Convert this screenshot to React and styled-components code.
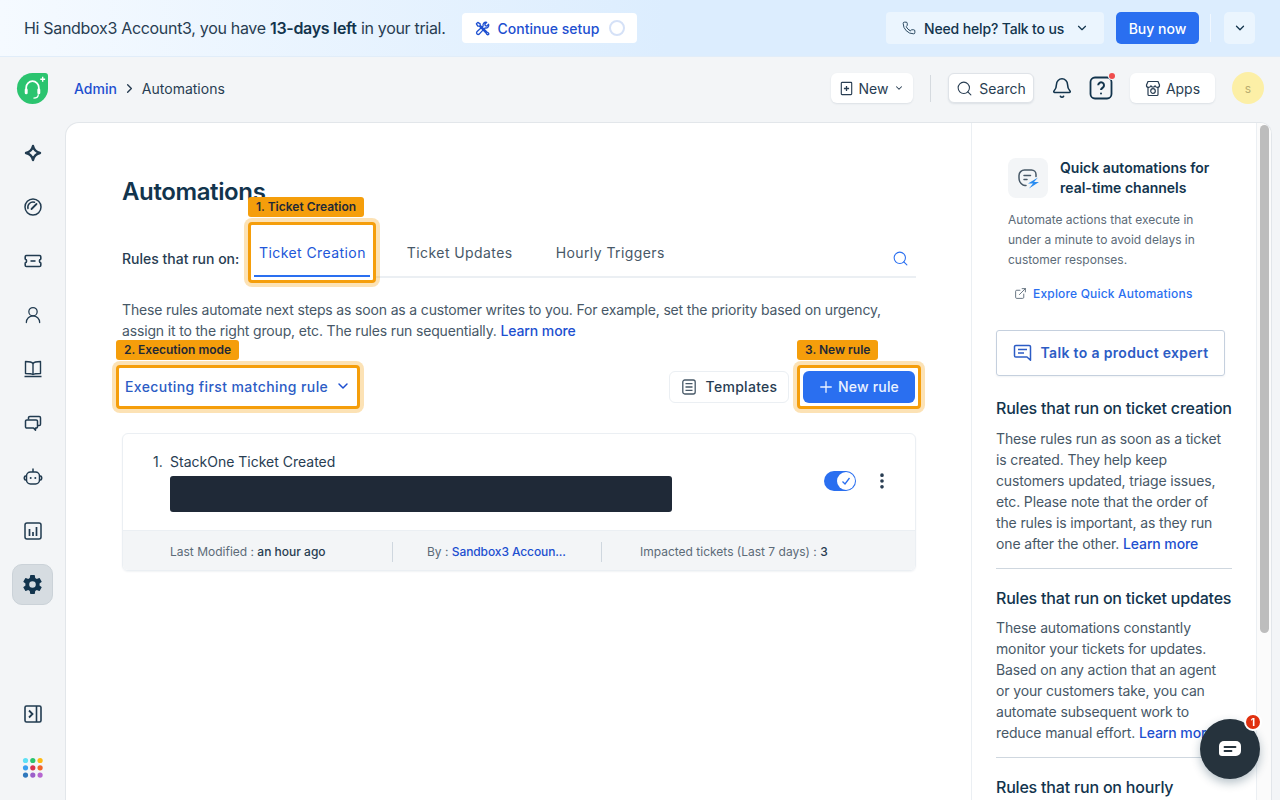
import React from "react"
import styled, { createGlobalStyle } from "styled-components"
import { BellIcon, ChevronDown, ChevronRight, ExternalLink, MoreVertical, Phone, Plus, Search, UserRound } from "lucide-react"
import { IoSettingsSharp } from "react-icons/io5"

const GlobalStyle = createGlobalStyle`
  html, body {
    margin: 0;
    height: 100%;
    overflow: hidden;
    background: #f3f5f7;
    font-family: Inter, "Liberation Sans", sans-serif;
    color: #12344d;
  }
  * { box-sizing: border-box; }
`

const Page = styled.div`
  width: 1280px;
  height: 800px;
  display: flex;
  flex-direction: column;
  overflow: hidden;
`

/* trial banner */
const Banner = styled.div`
  height: 57px;
  flex: none;
  display: flex;
  align-items: center;
  padding: 0 25px 0 24px;
  background: linear-gradient(90deg, #f5faff 0%, #dcedfe 52%, #dcedfe 100%);
  border-bottom: 1px solid #e1edf9;
`
const TrialText = styled.div`
  font-size: 16px;
  letter-spacing: -0.31px;
  color: #283d52;
  white-space: nowrap;
  b { font-weight: 600; color: #12344d; }
`
const SetupButton = styled.div`
  margin-left: 17px;
  width: 175px;
  height: 30px;
  border-radius: 4px;
  background: #fff;
  display: flex;
  align-items: center;
  padding: 0 12px 0 13px;
  gap: 7px;
  color: #1d4fd0;
  font-size: 14px;
  font-weight: 500;
  white-space: nowrap;
`
const ProgressRing = styled.span`
  width: 16px;
  height: 16px;
  margin-left: auto;
  border-radius: 50%;
  border: 2px solid #d5e1f7;
`
const BannerRight = styled.div`
  margin-left: auto;
  display: flex;
  align-items: center;
`
const HelpButton = styled.div`
  width: 218px;
  height: 32px;
  border-radius: 4px;
  background: #ebf5fe;
  display: flex;
  align-items: center;
  padding-left: 16px;
  gap: 8px;
  font-size: 14px;
  font-weight: 500;
  letter-spacing: -0.15px;
  white-space: nowrap;
`
const BuyButton = styled.div`
  margin-left: 12px;
  width: 83px;
  height: 32px;
  border-radius: 5px;
  background: #2a6ff0;
  color: #fff;
  display: flex;
  align-items: center;
  justify-content: center;
  font-size: 14px;
  font-weight: 500;
`
const BannerDivider = styled.span`
  width: 1px;
  height: 28px;
  margin: 0 13px 0 11px;
  background: #f0f7ff;
`
const CollapseButton = styled.div`
  width: 31px;
  height: 32px;
  border-radius: 5px;
  background: #ebf5fe;
  display: flex;
  align-items: center;
  justify-content: center;
`

/* top bar */
const TopBar = styled.div`
  height: 65px;
  flex: none;
  display: flex;
  align-items: center;
  padding: 0 16px 3px 16px;
`
const Crumbs = styled.div`
  margin-left: 25px;
  display: flex;
  align-items: center;
  gap: 5px;
  font-size: 14px;
  color: #283d52;
`
const CrumbLink = styled.span`
  color: #1d4fd0;
  font-weight: 500;
`
const TopActions = styled.div`
  margin-left: auto;
  display: flex;
  align-items: center;
`
const WhiteButton = styled.div`
  height: 30px;
  width: ${(p) => p.$w}px;
  border-radius: 6px;
  background: #fff;
  display: flex;
  align-items: center;
  justify-content: center;
  gap: ${(p) => p.$gap || 6}px;
  font-size: 14px;
  color: #283d52;
  box-shadow: 0 1px 2px rgba(18, 52, 77, 0.1);
  border: ${(p) => (p.$outlined ? "1px solid #dfe3e8" : "none")};
`
const TopDivider = styled.span`
  width: 1px;
  height: 27px;
  margin: 0 17px;
  background: #d5dadf;
`
const IconSlot = styled.span`
  position: relative;
  display: flex;
  margin-left: ${(p) => p.$ml || 0}px;
`
const RedDot = styled.span`
  position: absolute;
  top: -3px;
  right: -2px;
  width: 6px;
  height: 6px;
  border-radius: 50%;
  background: #ef4d4d;
  box-shadow: 0 0 0 1px #f3f5f7;
`
const Avatar = styled.div`
  width: 32px;
  height: 32px;
  margin-left: 17px;
  border-radius: 50%;
  background: #fcefa6;
  color: #b9ad70;
  font-size: 12px;
  display: flex;
  align-items: center;
  justify-content: center;
`

/* body */
const Body = styled.div`
  flex: 1;
  display: flex;
  min-height: 0;
  padding-right: 8px;
`
const Sidebar = styled.nav`
  width: 65px;
  flex: none;
  display: flex;
  flex-direction: column;
  align-items: center;
  padding: 10px 0 0 0;
`
const NavItem = styled.div`
  width: 41px;
  height: 41px;
  margin-bottom: 13px;
  border-radius: 10px;
  display: flex;
  align-items: center;
  justify-content: center;
  color: #213b50;
  background: ${(p) => (p.$active ? "#d6dce1" : "transparent")};
  border: ${(p) => (p.$active ? "1px solid #cbd2d8" : "none")};
`
const NavSpacer = styled.div`
  flex: 1;
`
const NavBottom = styled(NavItem)`
  margin-bottom: ${(p) => p.$mb}px;
`
const Shell = styled.div`
  flex: 1;
  min-width: 0;
  display: flex;
  background: #fff;
  border: 1px solid #e2e6ea;
  border-bottom: none;
  border-top-left-radius: 14px;
  border-top-right-radius: 12px;
  overflow: hidden;
`
const Main = styled.main`
  width: 905px;
  flex: none;
  padding: 53px 55px 0 56px;
`
const Title = styled.h1`
  margin: 0;
  font-size: 24px;
  line-height: 32px;
  font-weight: 600;
  letter-spacing: -0.38px;
  color: #12344d;
`
const TabRow = styled.div`
  height: 61px;
  margin-top: 14px;
  display: flex;
  align-items: flex-start;
`
const RulesLabel = styled.div`
  width: 126px;
  margin-top: 27px;
  flex: none;
  font-size: 14px;
  line-height: 20px;
  font-weight: 500;
  color: #283d52;
  white-space: nowrap;
`
const Highlight = styled.div`
  position: relative;
  z-index: 2;
  border: 3px solid #f59e0b;
  border-radius: 4px;
  background: #fff;
  box-shadow: 0 0 0 4px rgba(245, 158, 11, 0.3);
  height: ${(p) => p.$h}px;
  padding: ${(p) => p.$pad};
  flex: none;
`
const HighlightLabel = styled.span`
  position: absolute;
  left: -3px;
  top: -28px;
  height: 20px;
  padding: 0 8px;
  border-radius: 3px;
  background: #f59e0b;
  color: #1f2937;
  font-size: 12px;
  font-weight: 600;
  line-height: 20px;
  white-space: nowrap;
`
const Tab = styled.div`
  height: 100%;
  display: flex;
  align-items: center;
  justify-content: center;
  font-size: 14px;
  font-weight: 400;
  letter-spacing: 0.42px;
  padding: ${(p) => p.$pad || 0};
  color: ${(p) => (p.$active ? "#2156d9" : "#475867")};
  border-bottom: ${(p) => (p.$active ? "2px solid #2a6ff0" : "none")};
  white-space: nowrap;
`
const TabRest = styled.div`
  flex: 1;
  height: 41px;
  margin-top: 15px;
  border-bottom: 2px solid #ebeff3;
  display: flex;
  align-items: flex-start;
  padding-bottom: 9px;
`
const TabSearch = styled.span`
  margin: 13px 7px 0 auto;
  display: flex;
  color: #2a6ff0;
`
const Description = styled.p`
  margin: 16px 0 0;
  font-size: 14px;
  line-height: 21px;
  letter-spacing: -0.16px;
  color: #475867;
  white-space: nowrap;
`
const TextLink = styled.span`
  color: #1d4fd0;
  font-weight: 500;
  letter-spacing: -0.1px;
`
const ModeRow = styled.div`
  margin: 24px -5px 0 -6px;
  display: flex;
  align-items: center;
`
const ModeSelect = styled.div`
  height: 100%;
  display: flex;
  align-items: center;
  gap: 7px;
  padding-bottom: 2px;
  font-size: 14px;
  font-weight: 500;
  letter-spacing: 0.4px;
  color: #2c5cc5;
  white-space: nowrap;
`
const TemplatesButton = styled.div`
  margin-left: auto;
  margin-right: 8px;
  width: 120px;
  height: 32px;
  padding-bottom: 1px;
  border: 1px solid #ebeff3;
  border-radius: 6px;
  display: flex;
  align-items: center;
  justify-content: center;
  gap: 9px;
  font-size: 14px;
  font-weight: 500;
  letter-spacing: 0.3px;
  color: #283d52;
`
const PrimaryButton = styled.div`
  width: 112px;
  height: 32px;
  padding: 0 2px 1px 0;
  border-radius: 6px;
  background: #2a6ff0;
  color: #eaf2ff;
  display: flex;
  align-items: center;
  justify-content: center;
  gap: 3px;
  font-size: 14px;
  font-weight: 500;
  letter-spacing: 0.2px;
`
const RuleCard = styled.div`
  margin-top: 24px;
  border: 1px solid #ebeff3;
  border-radius: 6px;
  box-shadow: 0 1px 2px rgba(18, 52, 77, 0.06);
  overflow: hidden;
`
const RuleTop = styled.div`
  height: 97px;
  display: flex;
  padding: 18px 23px 0 30px;
  border-bottom: 1px solid #ebeff3;
`
const RuleIndex = styled.div`
  width: 17px;
  font-size: 14px;
  line-height: 20px;
  color: #283d52;
`
const RuleBody = styled.div`
  width: 502px;
`
const RuleName = styled.div`
  font-size: 14px;
  line-height: 20px;
  color: #283d52;
`
const Redaction = styled.div`
  height: 36px;
  margin-top: 4px;
  border-radius: 3px;
  background: #1f2937;
`
const RuleControls = styled.div`
  margin-left: auto;
  display: flex;
  align-items: flex-start;
  padding-top: 19px;
  gap: 16px;
`
const Toggle = styled.div`
  width: 32px;
  height: 20px;
  border-radius: 10px;
  background: #2a6ff0;
  display: flex;
  align-items: center;
  justify-content: flex-end;
  padding-right: 1px;
`
const ToggleKnob = styled.span`
  width: 18px;
  height: 18px;
  border-radius: 50%;
  background: #fff;
  display: flex;
  align-items: center;
  justify-content: center;
`
const RuleFooter = styled.div`
  height: 39px;
  padding-top: 2px;
  background: #f3f5f7;
  display: grid;
  grid-template-columns: 269px 209px 1fr;
  align-items: center;
  font-size: 12px;
  color: #5c6b78;
`
const FooterCell = styled.div`
  height: 20px;
  line-height: 20px;
  padding-left: ${(p) => p.$pl}px;
  border-left: ${(p) => (p.$divided ? "1px solid #cfd7df" : "none")};
  white-space: nowrap;
  b { font-weight: 500; color: #283d52; }
`

/* right panel */
const Aside = styled.aside`
  width: 286px;
  flex: none;
  border-left: 1px solid #ebeff3;
  border-right: 1px solid #ebeff3;
  padding: 35px 24px 0 24px;
  overflow: hidden;
`
const QuickHead = styled.div`
  display: flex;
  gap: 12px;
  margin-left: 12px;
`
const QuickIcon = styled.div`
  width: 40px;
  height: 40px;
  flex: none;
  border-radius: 8px;
  background: #f3f5f7;
  display: flex;
  align-items: center;
  justify-content: center;
`
const QuickTitle = styled.div`
  font-size: 14px;
  line-height: 20px;
  font-weight: 600;
  color: #12344d;
  white-space: nowrap;
`
const QuickText = styled.p`
  margin: 12px 0 0 12px;
  font-size: 12px;
  line-height: 20px;
  color: #5c6b78;
  white-space: nowrap;
`
const QuickLink = styled.div`
  margin: 14px 0 0 18px;
  display: flex;
  align-items: center;
  gap: 6px;
  height: 18px;
  font-size: 12px;
  font-weight: 500;
  letter-spacing: 0.18px;
  color: #2a6ff0;
`
const ExpertButton = styled.div`
  margin-top: 28px;
  width: 229px;
  height: 46px;
  padding-bottom: 1px;
  border: 1px solid #c5d0de;
  border-radius: 3px;
  display: flex;
  align-items: center;
  justify-content: center;
  gap: 9px;
  font-size: 14px;
  font-weight: 600;
  letter-spacing: 0.33px;
  color: #2c5cc5;
  box-shadow: 0 1px 2px rgba(18, 52, 77, 0.06);
`
const HelpHeading = styled.h3`
  margin: ${(p) => p.$mt}px 0 0;
  font-size: 16px;
  line-height: 24px;
  font-weight: 500;
  letter-spacing: -0.2px;
  color: #12344d;
  white-space: nowrap;
`
const HelpText = styled.p`
  margin: ${(p) => p.$mt}px -4px 0 0;
  font-size: 14px;
  line-height: 21px;
  letter-spacing: -0.14px;
  color: #475867;
  white-space: nowrap;
`
const Rule = styled.hr`
  margin: 14px 0 0;
  border: none;
  border-top: 1px solid #cfd7df;
`
const ScrollTrack = styled.div`
  flex: 1;
  padding: 2px 0 0 3px;
  background: #fbfbfb;
`
const ScrollThumb = styled.div`
  height: 508px;
  width: 9px;
  border-radius: 5px;
  background: #bdbdbd;
`

const ChatBubble = styled.div`
  position: fixed;
  left: 1200px;
  top: 719px;
  width: 60px;
  height: 60px;
  border-radius: 50%;
  background: #26333d;
  box-shadow: 0 4px 10px rgba(18, 52, 77, 0.3);
  display: flex;
  align-items: center;
  justify-content: center;
`
const ChatBadge = styled.span`
  position: absolute;
  top: -6px;
  right: -2px;
  width: 18px;
  height: 18px;
  border-radius: 50%;
  background: #e0300f;
  border: 2px solid #fff;
  color: #fff;
  font-size: 10px;
  font-weight: 700;
  display: flex;
  align-items: center;
  justify-content: center;
`

const Logo = () => (
  <svg width="33" height="33" viewBox="0 0 34 34">
    <path d="M17 1h13a3 3 0 0 1 3 3v13a16 16 0 0 1-16 16A16 16 0 0 1 1 17 16 16 0 0 1 17 1z" fill="#2bc46f" />
    <path d="M10.5 20v-4a6.5 6.5 0 0 1 13 0v4" fill="none" stroke="#fff" strokeWidth="1.8" />
    <rect x="9" y="17" width="3" height="6" rx="1.4" fill="#fff" />
    <rect x="22" y="17" width="3" height="6" rx="1.4" fill="#fff" />
    <path d="M23 23c0 3-2 4-5 4" fill="none" stroke="#fff" strokeWidth="1.3" />
    <path d="M27.5 5v5M25 7.5h5" stroke="#fff" strokeWidth="1.4" />
  </svg>
)

const ToolsIcon = () => (
  <svg width="15" height="15" viewBox="0 0 16 16" fill="none" stroke="#1d4fd0" strokeWidth="1.4" strokeLinecap="round" strokeLinejoin="round">
    <path d="M1.5 3l1.500-1.500 2.500 1.500v1.500L13 12l1 .5.8 1.300-1 1-1.300-.8-.5-1L4.500 5.500H3z" />
    <path d="M14.500 3.500l-2 2-1.500-.5-.5-1.500 2-2a3 3 0 0 0-3.800 3.800L2 11.500a1.800 1.800 0 0 0 2.500 2.500l6.200-6.700a3 3 0 0 0 3.800-3.800z" />
  </svg>
)

const NewDocIcon = () => (
  <svg width="13" height="15" viewBox="0 0 15 17" fill="none" stroke="#283d52" strokeWidth="1.3">
    <rect x="1.500" y="1.500" width="12" height="14" rx="0.8" />
    <path d="M7.500 5.500v6M4.500 8.500h6" strokeWidth="1.500" />
  </svg>
)

const AppsIcon = () => (
  <svg width="16" height="17" viewBox="0 0 16 17" fill="none" stroke="#283d52" strokeWidth="1.200">
    <path d="M3 7v7.500a1 1 0 0 0 1 1h8a1 1 0 0 0 1-1V7" />
    <path d="M3 1.500h10l1.500 3.500a2 2 0 0 1-4.300.5 2.300 2.300 0 0 1-4.400 0A2 2 0 0 1 1.500 5z" />
    <circle cx="8" cy="11" r="2.300" />
  </svg>
)

const SparkIcon = () => (
  <svg width="18" height="18" viewBox="0 0 18 18">
    <path d="M9 2c.9 4 3 6.100 7 7-4 .9-6.100 3-7 7-.9-4-3-6.100-7-7 4-.9 6.100-3 7-7z" fill="none" stroke="#213b50" strokeWidth="2.400" strokeLinejoin="round" />
  </svg>
)

const GaugeIcon = () => (
  <svg width="20" height="20" viewBox="0 0 20 20" fill="none" stroke="#213b50" strokeWidth="1.500" strokeLinecap="round">
    <circle cx="10" cy="10" r="8" />
    <path d="M5 11.500a5.200 5.200 0 0 1 6.500-6.300" />
    <path d="M8.500 12l5-5" strokeWidth="1.800" />
  </svg>
)

const TicketIcon = () => (
  <svg width="20" height="20" viewBox="0 0 20 20" fill="none" stroke="#213b50" strokeWidth="1.600" strokeLinejoin="round">
    <path d="M3.500 4.500h13a1.300 1.300 0 0 1 1.300 1.300v2.300a2 2 0 0 0 0 3.800v2.300a1.300 1.300 0 0 1-1.300 1.300h-13a1.300 1.300 0 0 1-1.300-1.300v-2.300a2 2 0 0 0 0-3.800V5.800a1.300 1.300 0 0 1 1.300-1.300z" />
    <path d="M7.500 10h5" />
  </svg>
)

const BookIcon = () => (
  <svg width="20" height="20" viewBox="0 0 20 20" fill="none" stroke="#213b50" strokeWidth="1.400" strokeLinejoin="round">
    <path d="M10 4.500C9 3 7.500 2.500 2.500 2.500v12c5 0 6.500.3 7.500 1 1-.7 2.500-1 7.500-1v-12c-5 0-6.500.5-7.500 2z" />
    <path d="M10 4.500v11M1.500 17.500h17" />
  </svg>
)

const ChatsIcon = () => (
  <svg width="20" height="20" viewBox="0 0 20 20" fill="none" stroke="#213b50" strokeWidth="1.500" strokeLinejoin="round">
    <path d="M5.500 6.500V4.800a1.300 1.300 0 0 1 1.300-1.300h9.400a1.300 1.300 0 0 1 1.300 1.300v6.400a1.300 1.300 0 0 1-1.300 1.300h-1.700" />
    <path d="M3.800 7h9.400a1.300 1.300 0 0 1 1.300 1.300v5.400a1.300 1.300 0 0 1-1.300 1.300h-.7v2.300L10.500 15H3.800a1.300 1.300 0 0 1-1.300-1.300V8.300A1.300 1.300 0 0 1 3.800 7z" />
  </svg>
)

const BotIcon = () => (
  <svg width="20" height="20" viewBox="0 0 20 20" fill="none" stroke="#213b50" strokeWidth="1.500">
    <rect x="3.500" y="5" width="13" height="12" rx="4" />
    <path d="M10 5V1.500M3.500 9H2.800a1.500 1.500 0 0 0-1.500 1.500v1A1.500 1.500 0 0 0 2.800 13h.7M16.500 9h.7a1.500 1.500 0 0 1 1.500 1.500v1a1.500 1.500 0 0 1-1.500 1.500h-.7" />
    <circle cx="7.700" cy="11" r="1" fill="#213b50" stroke="none" />
    <circle cx="12.300" cy="11" r="1" fill="#213b50" stroke="none" />
  </svg>
)

const ReportIcon = () => (
  <svg width="20" height="20" viewBox="0 0 20 20" fill="none" stroke="#213b50" strokeWidth="1.500">
    <rect x="2" y="2" width="16" height="16" rx="2" />
    <path d="M6.500 8v7M10 11v4M13.500 6v9" strokeWidth="1.700" />
  </svg>
)

const PanelIcon = () => (
  <svg width="20" height="20" viewBox="0 0 20 20" fill="none" stroke="#213b50" strokeWidth="1.600">
    <rect x="2" y="2" width="16" height="16" rx="1.500" />
    <path d="M13.500 2v16" />
    <path d="M6 6.500l3.500 3.500L6 13.500" strokeWidth="1.800" />
  </svg>
)

const dots = ["#5ee0f5", "#2bc46f", "#fdb913", "#3aa0ef", "#d8324f", "#f0642a", "#2f78bd", "#9b5fc9", "#b566d0"]
const DotsIcon = () => (
  <svg width="22" height="22" viewBox="0 0 22 22">
    {dots.map((c, i) => (
      <circle key={i} cx={3.5 + (i % 3) * 7.3} cy={3.5 + Math.floor(i / 3) * 7.3} r="2.6" fill={c} />
    ))}
  </svg>
)

const QuickGlyph = () => (
  <svg width="24" height="24" viewBox="0 0 24 24" fill="none">
    <path d="M10 19.500H9c-1 0-1.600-.2-2.200-.6C4.500 17.500 3 15 3 12V9.500A5.500 5.500 0 0 1 8.500 4h7A4.500 4.500 0 0 1 20 8.500v2" stroke="#475867" strokeWidth="1.500" strokeLinecap="round" />
    <path d="M8 9.500h6.500M8 13.500h3" stroke="#475867" strokeWidth="1.500" strokeLinecap="round" />
    <path d="M22 11.500l-10 6h5l-4 5 10-6.500h-5z" fill="#2a8cf0" />
  </svg>
)

const ExpertIcon = () => (
  <svg width="19" height="19" viewBox="0 0 19 19" fill="none" stroke="#2c5cc5" strokeWidth="1.500" strokeLinejoin="round">
    <path d="M2.800 2.500h13.400a1.300 1.300 0 0 1 1.300 1.300v9.400v4l-3.500-3.200H2.800a1.300 1.300 0 0 1-1.300-1.300V3.800a1.300 1.300 0 0 1 1.300-1.300z" />
    <path d="M5 6.500h9M5 10h6" />
  </svg>
)

const ChatGlyph = () => (
  <svg width="24" height="18" viewBox="0 0 24 18">
    <path d="M6 1h12a5 5 0 0 1 5 5v5a5 5 0 0 1-5 5H4a3 3 0 0 1-3-3V6a5 5 0 0 1 5-5z" fill="#fff" />
    <path d="M6.500 7h11M6.500 11h7" stroke="#26333d" strokeWidth="1.800" strokeLinecap="round" />
  </svg>
)

const TemplateGlyph = () => (
  <svg width="16" height="16" viewBox="0 0 16 16" fill="none" stroke="#475867" strokeWidth="1.300">
    <rect x="1.800" y="1" width="12.400" height="14" rx="2" />
    <path d="M4.500 4.700h7M4.500 8h7M4.500 11.300h7" />
  </svg>
)

const SMALL_NAV = [
  <SparkIcon key="spark" />,
  <GaugeIcon key="gauge" />,
  <TicketIcon key="ticket" />,
  <UserRound key="user" size={20} strokeWidth={1.5} />,
  <BookIcon key="book" />,
  <ChatsIcon key="chats" />,
  <BotIcon key="bot" />,
  <ReportIcon key="report" />,
]

export default function App() {
  return (
    <Page>
      <GlobalStyle />
      <Banner>
        <TrialText>
          Hi Sandbox3 Account3, you have <b>13-days left</b> in your trial.
        </TrialText>
        <SetupButton>
          <ToolsIcon />
          Continue setup
          <ProgressRing />
        </SetupButton>
        <BannerRight>
          <HelpButton>
            <Phone size={14} strokeWidth={1.5} />
            Need help? Talk to us
            <ChevronDown size={14} style={{ marginLeft: 3 }} />
          </HelpButton>
          <BuyButton>Buy now</BuyButton>
          <BannerDivider />
          <CollapseButton>
            <ChevronDown size={14} strokeWidth={2.2} />
          </CollapseButton>
        </BannerRight>
      </Banner>

      <TopBar>
        <Logo />
        <Crumbs>
          <CrumbLink>Admin</CrumbLink>
          <ChevronRight size={15} strokeWidth={2.2} />
          Automations
        </Crumbs>
        <TopActions>
          <WhiteButton $w={82} $gap={6}>
            <NewDocIcon />
            New
            <ChevronDown size={10} strokeWidth={2.5} />
          </WhiteButton>
          <TopDivider />
          <WhiteButton $w={86} $outlined>
            <Search size={17} strokeWidth={1.5} />
            Search
          </WhiteButton>
          <IconSlot $ml={17}>
            <BellIcon size={22} strokeWidth={1.7} color="#12344d" />
          </IconSlot>
          <IconSlot $ml={16}>
            <svg width="24" height="24" viewBox="0 0 24 24" fill="none" stroke="#12344d" strokeWidth="1.8">
              <rect x="1.5" y="1.5" width="21" height="21" rx="4.5" />
              <path d="M9.200 9.300a2.900 2.900 0 1 1 4.600 2.300c-1 .7-1.800 1.300-1.800 2.500" strokeWidth="2" />
              <circle cx="12" cy="17.500" r="1" fill="#12344d" stroke="none" />
            </svg>
            <RedDot />
          </IconSlot>
          <IconSlot $ml={17}>
            <WhiteButton $w={85} $gap={5}>
              <AppsIcon />
              Apps
            </WhiteButton>
          </IconSlot>
          <Avatar>s</Avatar>
        </TopActions>
      </TopBar>

      <Body>
        <Sidebar>
          {SMALL_NAV.map((icon) => (
            <NavItem key={icon.key}>{icon}</NavItem>
          ))}
          <NavItem $active>
            <IoSettingsSharp size={21} color="#12344d" />
          </NavItem>
          <NavSpacer />
          <NavBottom $mb={13}>
            <PanelIcon />
          </NavBottom>
          <NavBottom $mb={12}>
            <DotsIcon />
          </NavBottom>
        </Sidebar>
        <Shell>
          <Main>
            <Title>Automations</Title>
            <TabRow>
              <RulesLabel>Rules that run on:</RulesLabel>
              <Highlight $h={61} $pad="0 3px 3px">
                <HighlightLabel>1. Ticket Creation</HighlightLabel>
                <Tab $active $pad="4px 4px 0 5px">Ticket Creation</Tab>
              </Highlight>
              <TabRest>
                <Tab $pad="0 22px 0 31px">Ticket Updates</Tab>
                <Tab $pad="0 21px">Hourly Triggers</Tab>
                <TabSearch>
                  <Search size={17} strokeWidth={1.5} />
                </TabSearch>
              </TabRest>
            </TabRow>
            <Description>
              These rules automate next steps as soon as a customer writes to you. For example, set the priority based on urgency,
              <br />
              assign it to the right group, etc. The rules run sequentially. <TextLink>Learn more</TextLink>
            </Description>
            <ModeRow>
              <Highlight $h={44} $pad="0 6px">
                <HighlightLabel>2. Execution mode</HighlightLabel>
                <ModeSelect>
                  Executing first matching rule
                  <ChevronDown size={16} strokeWidth={2.2} color="#1d4fd0" />
                </ModeSelect>
              </Highlight>
              <TemplatesButton>
                <TemplateGlyph />
                Templates
              </TemplatesButton>
              <Highlight $h={44} $pad="3px">
                <HighlightLabel>3. New rule</HighlightLabel>
                <PrimaryButton>
                  <Plus size={18} strokeWidth={1.8} />
                  New rule
                </PrimaryButton>
              </Highlight>
            </ModeRow>
            <RuleCard>
              <RuleTop>
                <RuleIndex>1.</RuleIndex>
                <RuleBody>
                  <RuleName>StackOne Ticket Created</RuleName>
                  <Redaction />
                </RuleBody>
                <RuleControls>
                  <Toggle>
                    <ToggleKnob>
                      <svg width="12" height="12" viewBox="0 0 12 12" fill="none" stroke="#2a6ff0" strokeWidth="1.3">
                        <path d="M2.500 6.500l2.500 2.500L9.500 3" />
                      </svg>
                    </ToggleKnob>
                  </Toggle>
                  <MoreVertical size={20} strokeWidth={2.4} color="#283d52" />
                </RuleControls>
              </RuleTop>
              <RuleFooter>
                <FooterCell $pl={47}>
                  Last Modified : <b>an hour ago</b>
                </FooterCell>
                <FooterCell $pl={34} $divided>
                  By : <TextLink>Sandbox3 Accoun...</TextLink>
                </FooterCell>
                <FooterCell $pl={38} $divided>
                  Impacted tickets (Last 7 days) : <b>3</b>
                </FooterCell>
              </RuleFooter>
            </RuleCard>
          </Main>

          <Aside>
            <QuickHead>
              <QuickIcon>
                <QuickGlyph />
              </QuickIcon>
              <QuickTitle>
                Quick automations for
                <br />
                real-time channels
              </QuickTitle>
            </QuickHead>
            <QuickText>
              Automate actions that execute in
              <br />
              under a minute to avoid delays in
              <br />
              customer responses.
            </QuickText>
            <QuickLink>
              <ExternalLink size={13} strokeWidth={1.5} color="#475867" />
              Explore Quick Automations
            </QuickLink>
            <ExpertButton>
              <ExpertIcon />
              Talk to a product expert
            </ExpertButton>
            <HelpHeading $mt={20}>Rules that run on ticket creation</HelpHeading>
            <HelpText $mt={8}>
              These rules run as soon as a ticket
              <br />
              is created. They help keep
              <br />
              customers updated, triage issues,
              <br />
              etc. Please note that the order of
              <br />
              the rules is important, as they run
              <br />
              one after the other. <TextLink>Learn more</TextLink>
            </HelpText>
            <Rule />
            <HelpHeading $mt={17}>Rules that run on ticket updates</HelpHeading>
            <HelpText $mt={7}>
              These automations constantly
              <br />
              monitor your tickets for updates.
              <br />
              Based on any action that an agent
              <br />
              or your customers take, you can
              <br />
              automate subsequent work to
              <br />
              reduce manual effort. <TextLink>Learn more</TextLink>
            </HelpText>
            <Rule />
            <HelpHeading $mt={17}>
              Rules that run on hourly
              <br />
              triggers
            </HelpHeading>
          </Aside>
          <ScrollTrack>
            <ScrollThumb />
          </ScrollTrack>
        </Shell>
      </Body>

      <ChatBubble>
        <ChatGlyph />
        <ChatBadge>1</ChatBadge>
      </ChatBubble>
    </Page>
  )
}
